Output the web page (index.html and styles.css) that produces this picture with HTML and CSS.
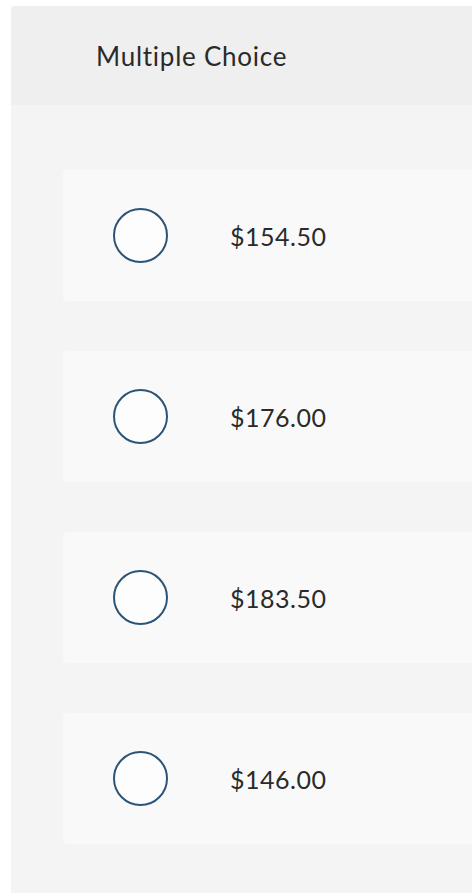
FILE: index.html
```html
<!DOCTYPE html>
<html lang="en">
<head>
<meta charset="utf-8">
<title>Multiple Choice</title>
<link rel="stylesheet" href="styles.css">
</head>
<body>
<section class="panel">
  <header class="panel-header">Multiple Choice</header>
  <div class="panel-body">
    <label class="choice"><span class="radio"></span><span class="choice-text">$154.50</span></label>
    <label class="choice"><span class="radio"></span><span class="choice-text">$176.00</span></label>
    <label class="choice"><span class="radio"></span><span class="choice-text">$183.50</span></label>
    <label class="choice"><span class="radio"></span><span class="choice-text">$146.00</span></label>
  </div>
</section>
</body>
</html>
```
FILE: styles.css
```css
html, body {
  margin: 0;
  padding: 0;
  background: #ffffff;
  overflow: hidden;
}
body {
  font-family: Lato, "Open Sans", "Liberation Sans", sans-serif;
  color: #2a2a2a;
}
.panel {
  margin: 6px 0 0 11px;
  background: #f4f4f4;
  border-top-left-radius: 3px;
}
.panel-header {
  height: 99px;
  background: #efefef;
  display: flex;
  align-items: center;
  padding-left: 85px;
  font-size: 26px;
  letter-spacing: 0.75px;
  border-top-left-radius: 3px;
}
.panel-body {
  padding: 65px 0 49px 52px;
  display: flex;
  flex-direction: column;
  gap: 50px;
}
.choice {
  height: 131px;
  background: #f9f9f9;
  border-radius: 4px 0 0 4px;
  display: flex;
  align-items: center;
  padding-left: 50px;
  gap: 62px;
}
.radio {
  width: 51px;
  height: 51px;
  border: 2px solid #2b5477;
  border-radius: 50%;
  background: #fdfdfd;
  flex: none;
}
.choice-text {
  font-size: 25px;
  letter-spacing: 0.5px;
}
```
